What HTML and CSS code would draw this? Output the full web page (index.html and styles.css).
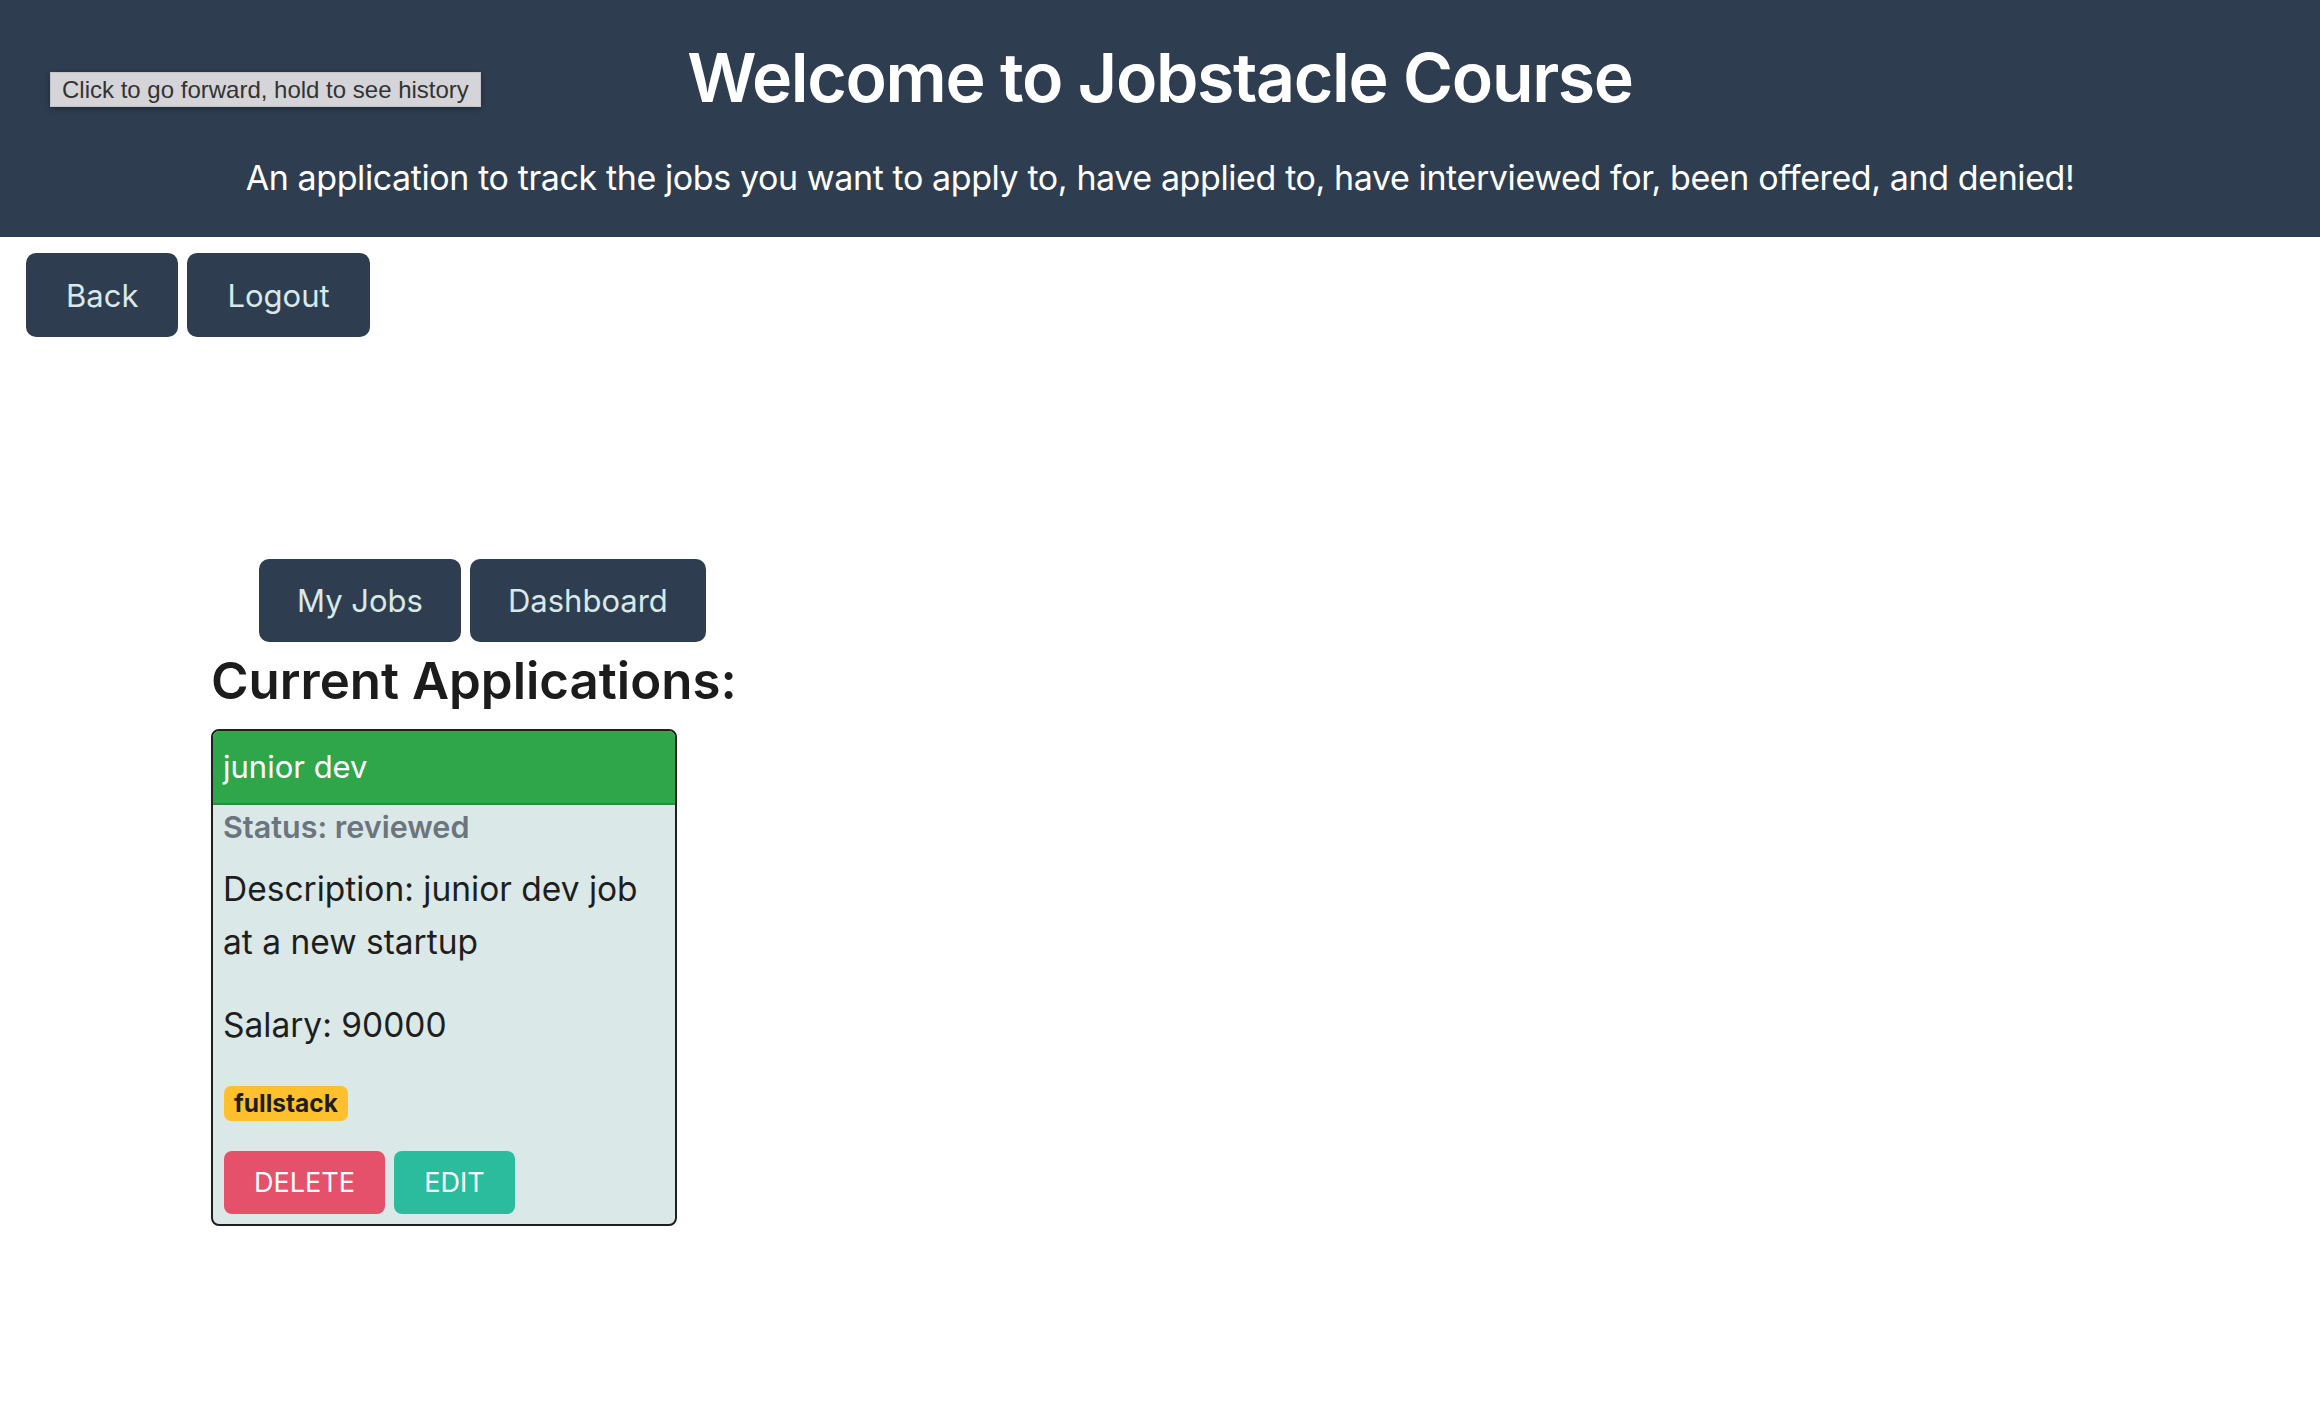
FILE: index.html
```html
<!DOCTYPE html>
<html lang="en">
<head>
<meta charset="utf-8">
<title>Jobstacle Course</title>
<link rel="stylesheet" href="styles.css">
</head>
<body>
<header class="site-header">
  <h1 class="site-title">Welcome to Jobstacle Course</h1>
  <p class="site-sub">An application to track the jobs you want to apply to, have applied to, have interviewed for, been offered, and denied!</p>
  <div class="tooltip">Click to go forward, hold to see history</div>
</header>
<nav class="top-nav">
  <button class="btn-dark">Back</button>
  <button class="btn-dark">Logout</button>
</nav>
<main class="content">
  <div class="sub-nav">
    <button class="btn-dark btn-sub">My Jobs</button>
    <button class="btn-dark btn-sub">Dashboard</button>
  </div>
  <h2 class="section-title">Current Applications:</h2>
  <div class="job-card">
    <div class="job-card-header">junior dev</div>
    <div class="job-card-body">
      <div class="job-status">Status: reviewed</div>
      <p class="job-text job-desc">Description: junior dev job at a new startup</p>
      <p class="job-text job-salary">Salary: 90000</p>
      <div class="job-tags"><span class="badge">fullstack</span></div>
      <div class="job-actions">
        <button class="btn-action btn-delete">DELETE</button>
        <button class="btn-action btn-edit">EDIT</button>
      </div>
    </div>
  </div>
</main>
</body>
</html>
```

FILE: styles.css
```css
* { box-sizing: border-box; }
html, body { margin: 0; padding: 0; background: #ffffff; }
body { font-family: Inter, "Noto Sans", sans-serif; color: #212529; }

.site-header {
  position: relative;
  height: 237px;
  background: #2e3e50;
  color: #ffffff;
  text-align: center;
  padding-top: 37px;
}
.site-title {
  margin: 0;
  font-size: 68px;
  line-height: 80px;
  font-weight: 600;
  letter-spacing: -1.35px;
}
.site-sub {
  margin: 36px 0 0;
  font-size: 34px;
  line-height: 50px;
  font-weight: 400;
  letter-spacing: -0.4px;
}
.tooltip {
  position: absolute;
  left: 50px;
  top: 72px;
  height: 35px;
  padding: 0 11px;
  background: #d5d5d9;
  border: 1px solid #c4c4c8;
  color: #333333;
  font-family: "Liberation Sans", Arial, sans-serif;
  font-size: 24px;
  line-height: 33px;
  text-align: left;
  white-space: nowrap;
  box-shadow: 0 2px 6px rgba(0,0,0,0.35);
}

.top-nav {
  display: flex;
  gap: 9px;
  padding: 16px 0 0 26px;
}
.btn-dark {
  height: 84px;
  padding: 0 40px;
  border: none;
  border-radius: 10px;
  background: #2e3e50;
  color: #d9e8e8;
  font-family: Inter, "Noto Sans", sans-serif;
  font-size: 31px;
  cursor: pointer;
}

.content {
  padding-left: 211px;
  margin-top: 222px;
}
.sub-nav {
  display: flex;
  gap: 9px;
  padding-left: 48px;
}
.btn-sub { height: 83px; padding: 0 38px; }

.section-title {
  margin: 9px 0 0;
  font-size: 51px;
  line-height: 60px;
  font-weight: 600;
  color: #1c1c1c;
}

.job-card {
  margin-top: 18px;
  width: 466px;
  border: 2px solid #1f1f1f;
  border-radius: 8px;
  overflow: hidden;
  background: #dae8e8;
}
.job-card-header {
  height: 74px;
  padding: 0 10px;
  background: #30a64a;
  border-bottom: 2px solid #278d3e;
  color: #ffffff;
  font-size: 31px;
  line-height: 72px;
}
.job-card-body {
  padding: 0 10px 10px;
}
.job-status {
  height: 44px;
  font-size: 30.5px;
  line-height: 44px;
  font-weight: 600;
  color: #6c757d;
}
.job-text {
  margin: 0;
  font-size: 33.5px;
  line-height: 53px;
  color: #1e1e1e;
}
.job-desc { margin-top: 14px; }
.job-salary { margin-top: 30px; }
.job-tags { margin-top: 34px; height: 35px; padding-left: 1px; }
.badge {
  display: inline-block;
  height: 35px;
  padding: 0 10px;
  border-radius: 7px;
  background: #ffc02e;
  color: #1e1e1e;
  font-size: 24.5px;
  line-height: 35px;
  font-weight: 700;
}
.job-actions {
  display: flex;
  gap: 9px;
  margin-top: 30px;
  padding-left: 1px;
}
.btn-action {
  height: 63px;
  border: none;
  border-radius: 8px;
  color: #ffffff;
  font-family: Inter, "Noto Sans", sans-serif;
  font-size: 27px;
  cursor: pointer;
}
.btn-delete { width: 161px; background: #e5506b; }
.btn-edit { width: 121px; background: #2bbc9d; }
```
